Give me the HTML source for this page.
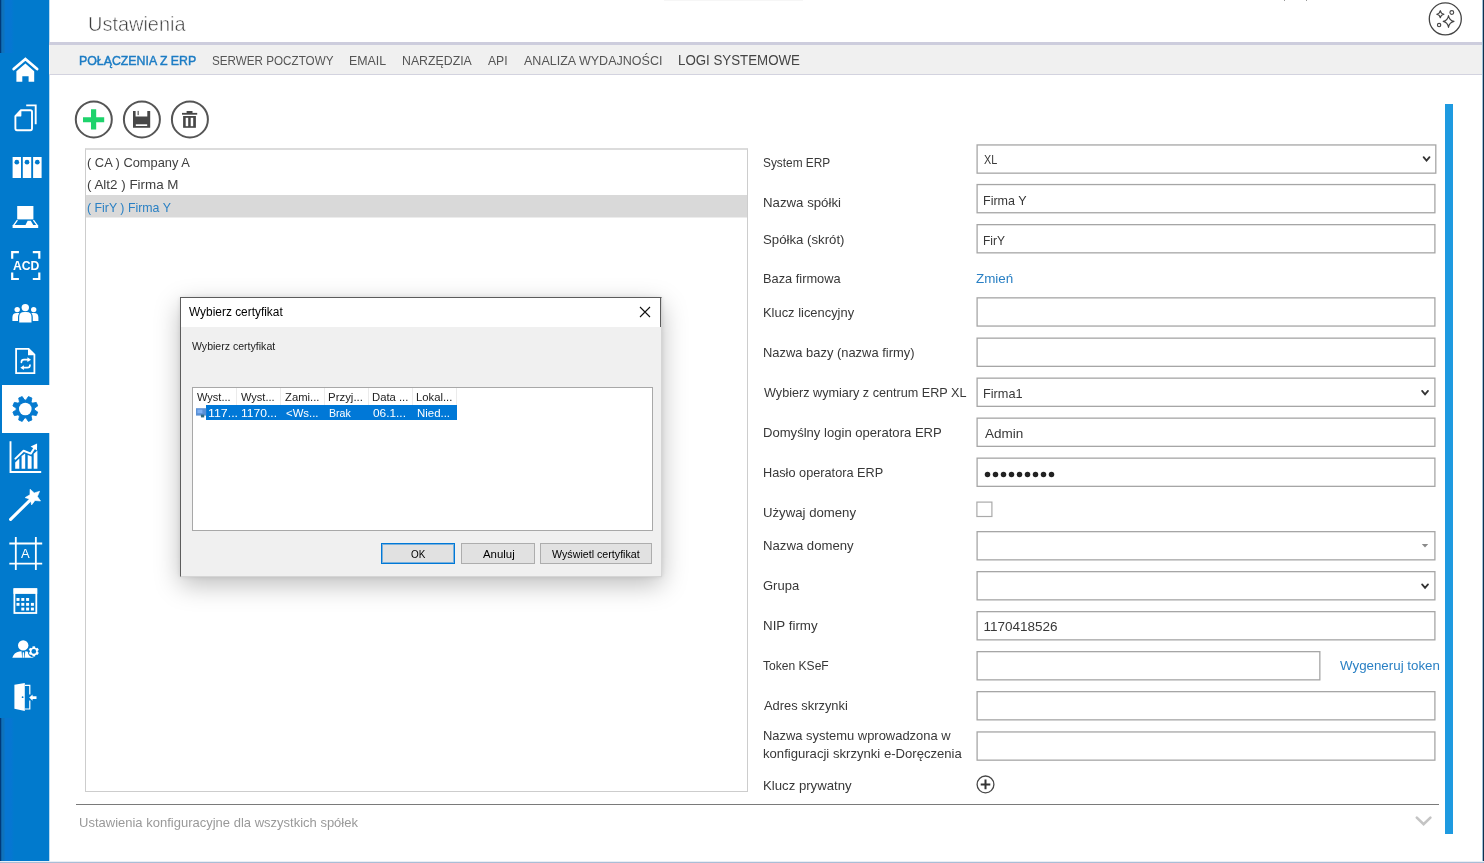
<!DOCTYPE html>
<html lang="pl">
<head>
<meta charset="utf-8">
<title>Ustawienia</title>
<style>
html,body{margin:0;padding:0;}
body{width:1484px;height:863px;overflow:hidden;background:#fff;position:relative;font-family:"Liberation Sans",sans-serif;}
.abs{position:absolute;}
.t{position:absolute;white-space:nowrap;line-height:1;transform-origin:0 0;display:inline-block;}
#side{left:0;top:0;width:49px;height:863px;background:#017acd;}
#side .dk{position:absolute;left:0;width:14px;background:linear-gradient(to right,#003a7a 0,#003a7a 1px,#0b62aa 1px,#0b62aa 2px,#0f72ba 2px,#0f72ba 4px,#0676d2 5px,#0676d2 11px,#017acd 14px);}
#active{left:2px;top:385px;width:48px;height:48px;background:#fff;}
#hline{left:49px;top:42px;width:1435px;height:3px;background:#cdcddd;}
#tabs{left:49px;top:45px;width:1435px;height:29px;background:#f0f0f0;border-bottom:1px solid #d3d3df;}
#list{left:85px;top:148px;width:661px;height:641px;border:1px solid #cdcdcd;border-top:2px solid #dcdcdc;background:#fff;}
#sel{left:86px;top:195px;width:661px;height:22px;background:#d9d9d9;border-bottom:1px solid #ececec;}
.in{position:absolute;left:976px;width:458px;height:28px;border:1px solid #ababab;background:#fff;box-shadow:0 0 0 0.5px #d8d8d8;}
#bar{left:1445px;top:104px;width:8px;height:730px;background:#1e9ae0;}
#bline{left:76px;top:804px;width:1363px;height:1px;background:#7a7a7a;}
#redge{left:1482px;top:0;width:2px;height:863px;background:linear-gradient(to right,#9dc0d8 0,#9dc0d8 1px,#10304c 1px,#10304c 2px);}
#bedge{left:0;top:861px;width:1484px;height:2px;background:linear-gradient(#e9eef5 0,#e9eef5 1px,#a9bdd6 1px,#a9bdd6 2px);}
#chk{left:976px;top:502px;width:14px;height:13px;border:1px solid #aaa;background:#fff;}
/* dialog */
#dlg{left:180px;top:297px;width:480px;height:278px;background:#f0f0f0;border:1px solid #5c5c5c;border-right-color:#d5d5d5;border-bottom-color:#d5d5d5;box-shadow:0 8px 24px rgba(0,0,0,.26),0 0 5px rgba(0,0,0,.10);}
#dtitle{left:181px;top:298px;width:480px;height:29px;background:#fff;}
#dtr{left:660px;top:297px;width:1px;height:30px;background:#5c5c5c;}
#dlist{left:192px;top:387px;width:459px;height:142px;border:1px solid #a8a8a8;background:#fff;}
.cd{position:absolute;top:388px;width:1px;height:17px;background:#ebebeb;}
#drow{left:206px;top:405px;width:251px;height:15px;background:#0078d7;}
.btn{position:absolute;top:543px;height:19px;border:1px solid #adadad;background:#e1e1e1;}
</style>
</head>
<body>
<div id="side" class="abs">
  <div class="dk" style="top:0;height:53px"></div>
  <div class="dk" style="top:718px;height:145px"></div>
</div>
<div id="sedge" class="abs" style="left:49px;top:0;width:1px;height:863px;background:#b9daf1"></div>
<div id="active" class="abs"></div>
<svg class="abs" style="left:0;top:0;will-change:transform" width="49" height="863" viewBox="0 0 49 863" fill="none" stroke="none">
 <!-- home -->
 <g>
  <path d="M13.7 69 L25.4 59 L37.1 69" stroke="#fff" stroke-width="2.8" stroke-linecap="round" stroke-linejoin="miter"/>
  <path d="M16.4 71.2 L25.4 63.6 L34.2 71.2 V81.8 H28.6 V76.2 H22.3 V81.8 H16.4 Z" fill="#fff"/>
 </g>
 <!-- docs -->
 <g stroke="#fff" stroke-width="1.9" stroke-linejoin="round" stroke-linecap="round">
  <path d="M21 110.2 H30.4 Q32 110.2 32 111.8 V128.6 Q32 130.2 30.4 130.2 H17 Q15.4 130.2 15.4 128.6 V116.2 Z"/>
  <path d="M26.2 105.4 H35.7 V124.2" stroke-linecap="butt" stroke-linejoin="miter"/>
 </g>
 <path d="M15.2 116.6 L21.4 110 V115.4 Q21.4 116.6 20.2 116.6 Z" fill="#fff"/>
 <!-- binders -->
 <g fill="#fff">
  <rect x="12.6" y="157" width="8.4" height="21"/>
  <rect x="22.8" y="157" width="8.4" height="21"/>
  <rect x="33.1" y="157" width="8.5" height="21"/>
  <circle cx="16.8" cy="162.2" r="2.35" fill="#017acd"/>
  <circle cx="27" cy="162.2" r="2.35" fill="#017acd"/>
  <circle cx="37.3" cy="162.2" r="2.35" fill="#017acd"/>
 </g>
 <!-- scanner -->
 <g>
  <rect x="17.2" y="206" width="16.2" height="13.4" fill="#fff"/>
  <path d="M17.4 220.2 L13.4 225.6 H37.4 L33.4 220.2" stroke="#fff" stroke-width="1.3" stroke-linejoin="round"/>
  <rect x="12.6" y="225" width="25.6" height="3" fill="#fff"/>
  <path d="M25.4 225.2 L27.6 220.8 H30.8 L33.4 225.2 Z" fill="#fff"/>
 </g>
 <!-- ACD -->
 <g stroke="#fff" stroke-width="2.2" stroke-linecap="butt">
  <path d="M12.2 258.8 V252.2 H18.9"/>
  <path d="M32.8 252.2 H39.3 V258.8"/>
  <path d="M12.2 272.6 V279 H18.9"/>
  <path d="M32.8 279 H39.3 V272.6"/>
 </g>
 <text x="26.15" y="270.1" text-anchor="middle" font-family="Liberation Sans, sans-serif" font-weight="bold" font-size="12" fill="#fff" textLength="26.5" lengthAdjust="spacingAndGlyphs">ACD</text>
 <!-- people -->
 <g fill="#fff">
  <circle cx="25.3" cy="307.6" r="3.7"/>
  <path d="M19.2 322.4 V317 Q19.2 312 24.2 312 H26.6 Q31.5 312 31.5 317 V322.4 Z"/>
  <circle cx="17.2" cy="309.6" r="2.7"/>
  <path d="M12.4 321 V317.2 Q12.4 312.9 16.8 312.9 H19.4 Q18 314.6 18 317 V321 Z"/>
  <circle cx="33.7" cy="309.6" r="2.7"/>
  <path d="M38.4 321 V317.2 Q38.4 312.9 34 312.9 H31.4 Q32.8 314.6 32.8 317 V321 Z"/>
 </g>
 <!-- doc sync -->
 <g stroke="#fff" stroke-width="1.8" stroke-linejoin="miter" stroke-linecap="butt">
  <path d="M16.1 348.8 H28.6 L34.4 354.6 V373.2 H16.1 Z"/>
 </g>
 <path d="M28 348.4 L34.8 355.2 H28 Z" fill="#fff"/>
 <g stroke="#fff" stroke-width="1.7" stroke-linecap="round">
  <path d="M21.4 362.3 Q21.4 359.7 24 359.7 H28"/>
  <path d="M30 365 Q30 367.7 27.3 367.7 H23.4"/>
 </g>
 <path d="M27.4 357.3 L31 359.7 L27.4 362.1 Z" fill="#fff"/>
 <path d="M23.9 365.3 L20.3 367.7 L23.9 370.1 Z" fill="#fff"/>
 <!-- gear (active) -->
 <path d="M25.30 400.20 L26.47 399.47 L28.40 396.58 L31.89 398.03 L31.21 401.44 L31.52 402.78 L32.86 403.09 L36.27 402.41 L37.72 405.90 L34.83 407.83 L34.10 409.00 L34.83 410.17 L37.72 412.10 L36.27 415.59 L32.86 414.91 L31.52 415.22 L31.21 416.56 L31.89 419.97 L28.40 421.42 L26.47 418.53 L25.30 417.80 L24.13 418.53 L22.20 421.42 L18.71 419.97 L19.39 416.56 L19.08 415.22 L17.74 414.91 L14.33 415.59 L12.88 412.10 L15.77 410.17 L16.50 409.00 L15.77 407.83 L12.88 405.90 L14.33 402.41 L17.74 403.09 L19.08 402.78 L19.39 401.44 L18.71 398.03 L22.20 396.58 L24.13 399.47 Z" fill="#067acf" stroke="#067acf" stroke-width="0.9" stroke-linejoin="round"/>
 <circle cx="25.3" cy="409" r="6.3" fill="#fff"/>
 <!-- chart -->
 <g>
  <path d="M10.5 441.2 V472 H41.2" stroke="#fff" stroke-width="1.9"/>
  <g fill="#fff">
   <path d="M15.2 462.6 L19.3 458.6 V468.8 H15.2 Z"/>
   <path d="M21.6 456 L25.2 453.6 V468.8 H21.6 Z"/>
   <path d="M27.7 455 L31.6 456.4 V468.8 H27.7 Z"/>
   <path d="M33.7 453.8 L37.4 450.6 V468.8 H33.7 Z"/>
  </g>
  <path d="M15.4 458.6 L23.6 450.8 L30.8 453.6 L34.6 447.8" stroke="#fff" stroke-width="2" stroke-linejoin="round" stroke-linecap="round"/>
  <path d="M30.6 446.4 L37.1 443.4 L37 450.6 Z" fill="#fff"/>
 </g>
 <!-- wand -->
 <g>
  <path d="M10.6 519.4 L30.4 499.8" stroke="#fff" stroke-width="3.1" stroke-linecap="round"/>
  <path d="M30.09 489.19 L34.27 492.89 L39.62 491.30 L37.38 496.42 L40.55 501.01 L34.99 500.47 L31.60 504.90 L30.40 499.45 L25.14 497.60 L29.95 494.77 Z" fill="#fff" stroke="#fff" stroke-width="0.6" stroke-linejoin="round"/>
 </g>
 <!-- grid A -->
 <g stroke="#fff" stroke-width="1.8">
  <path d="M15.8 537.1 V570 M35.85 537.1 V570 M9.3 543.5 H42.2 M9.3 563.7 H42.2"/>
 </g>
 <text x="25.4" y="557.5" text-anchor="middle" font-family="Liberation Sans, sans-serif" font-size="13" fill="#fff">A</text>
 <!-- calendar -->
 <g>
  <rect x="14.4" y="589.2" width="21.9" height="23.8" stroke="#fff" stroke-width="1.8"/>
  <rect x="13.5" y="588.3" width="23.7" height="5.6" fill="#fff"/>
  <g fill="#fff">
   <rect x="16.5" y="598" width="3" height="2.9"/><rect x="21.3" y="598" width="3" height="2.9"/><rect x="26.1" y="598" width="3" height="2.9"/>
   <rect x="16.5" y="602.9" width="3" height="2.9"/><rect x="21.3" y="602.9" width="3" height="2.9"/><rect x="26.1" y="602.9" width="3" height="2.9"/><rect x="30.9" y="602.9" width="3" height="2.9"/>
   <rect x="21.3" y="607.6" width="3" height="2.9"/><rect x="26.1" y="607.6" width="3" height="2.9"/><rect x="30.9" y="607.6" width="3" height="2.9"/>
  </g>
 </g>
 <!-- user gear -->
 <g fill="#fff">
  <circle cx="23.2" cy="645.4" r="5.2"/>
  <path d="M12.3 657.8 Q13.8 652.4 19.4 651.4 L21.5 651.2 L22.2 657.8 Z"/>
  <path d="M24.6 657.8 L25.3 651.2 L27.2 651.4 Q30.6 652 32.4 654.6 L33.6 657.8 Z"/>
  <path d="M22.8 652.2 H24 L24.3 657.8 H22.5 Z"/>
  <circle cx="33.8" cy="651.4" r="6" fill="#017acd"/>
  <g transform="translate(33.8 651.4)">
   <rect x="-1.3" y="-5.1" width="2.6" height="10.2"/>
   <rect x="-1.3" y="-5.1" width="2.6" height="10.2" transform="rotate(60)"/>
   <rect x="-1.3" y="-5.1" width="2.6" height="10.2" transform="rotate(120)"/>
   <circle r="3.9"/>
   <circle r="2.35" fill="#017acd"/>
  </g>
 </g>
 <!-- door -->
 <g>
  <path d="M14.4 684.8 L24.8 683 V711 L14.4 708.8 Z" fill="#fff"/>
  <path d="M24.8 685.4 H29.8 V694.6 M29.8 700.6 V709 H24.8" stroke="#fff" stroke-width="1.2"/>
  <circle cx="22.6" cy="697.2" r="0.9" fill="#017acd"/>
  <path d="M29.2 697.6 L32.6 694.6 V696.2 H36.5 V699.1 H32.6 V700.7 Z" fill="#fff"/>
 </g>
</svg>

<div id="hline" class="abs"></div>
<div id="tabs" class="abs"></div>
<div id="list" class="abs"></div>
<div id="sel" class="abs"></div>


<svg class="abs" style="left:0;top:0" width="1484" height="863" viewBox="0 0 1484 863" fill="#fff" stroke="#a6a6a6" stroke-width="1.3">
 <rect x="977.1" y="144.95" width="458.70" height="28.20"/>
 <rect x="977.1" y="184.55" width="457.80" height="28.20"/>
 <rect x="977.1" y="224.65" width="457.80" height="28.20"/>
 <rect x="977.1" y="297.85" width="457.80" height="28.20"/>
 <rect x="977.1" y="338.15" width="457.80" height="28.20"/>
 <rect x="977.1" y="378.15" width="457.80" height="28.20"/>
 <rect x="977.1" y="418.15" width="457.80" height="28.20"/>
 <rect x="977.1" y="458.15" width="457.80" height="28.20"/>
 <rect x="977.1" y="531.65" width="457.80" height="28.20"/>
 <rect x="977.1" y="571.65" width="457.80" height="28.20"/>
 <rect x="977.1" y="611.65" width="457.80" height="28.20"/>
 <rect x="977.1" y="651.65" width="342.75" height="28.20"/>
 <rect x="977.1" y="691.65" width="457.80" height="28.20"/>
 <rect x="977.1" y="731.95" width="457.80" height="28.20"/>
 <rect x="976.9" y="502.1" width="15" height="14.4" stroke="#aaa" stroke-width="1.2"/>
</svg>
<div id="bar" class="abs"></div>
<div id="bline" class="abs"></div>

<div id="dlg" class="abs"></div>
<div id="dtitle" class="abs"></div>
<div id="dtr" class="abs"></div>
<div id="dlist" class="abs"></div>
<div class="cd" style="left:236px"></div><div class="cd" style="left:280px"></div><div class="cd" style="left:324px"></div>
<div class="cd" style="left:368px"></div><div class="cd" style="left:412px"></div><div class="cd" style="left:456px"></div>
<div id="drow" class="abs"></div>
<div class="btn" style="left:381px;width:72px;border:1px solid #0078d7;box-shadow:inset 0 0 0 1px rgba(0,120,215,.45)"></div>
<div class="btn" style="left:461px;width:72px"></div>
<div class="btn" style="left:540px;width:110px"></div>

<div id="txt" style="position:absolute;left:0;top:0;width:1484px;height:863px;will-change:transform;">
<span class="t" id="t0" style="left:88.22px;top:12.72px;font-size:21px;color:#3c3c3c;-webkit-text-stroke:0.55px #fff;transform:scaleX(0.9502)">Ustawienia</span>
<span class="t" id="t1" style="left:78.87px;top:54.00px;font-size:13px;color:#1c7cc4;-webkit-text-stroke:0.45px #1c7cc4;transform:scaleX(0.9489)">POŁĄCZENIA Z ERP</span>
<span class="t" id="t2" style="left:211.94px;top:54.00px;font-size:13px;color:#555;transform:scaleX(0.8976)">SERWER POCZTOWY</span>
<span class="t" id="t3" style="left:349.13px;top:54.00px;font-size:13px;color:#555;transform:scaleX(0.9520)">EMAIL</span>
<span class="t" id="t4" style="left:401.73px;top:54.00px;font-size:13px;color:#555;transform:scaleX(0.9476)">NARZĘDZIA</span>
<span class="t" id="t5" style="left:488.40px;top:54.00px;font-size:13px;color:#555;transform:scaleX(0.9367)">API</span>
<span class="t" id="t6" style="left:523.70px;top:54.00px;font-size:13px;color:#555;transform:scaleX(0.9628)">ANALIZA WYDAJNOŚCI</span>
<span class="t" id="t7" style="left:677.93px;top:53.15px;font-size:14px;color:#444;transform:scaleX(0.9500)">LOGI SYSTEMOWE</span>
<span class="t" id="t8" style="left:87.17px;top:155.57px;font-size:13.5px;color:#404040;transform:scaleX(0.9522)">( CA ) Company A</span>
<span class="t" id="t9" style="left:87.13px;top:178.07px;font-size:13.5px;color:#404040;transform:scaleX(0.9917)">( Alt2 ) Firma M</span>
<span class="t" id="t10" style="left:87.20px;top:200.57px;font-size:13.5px;color:#2a80c4;transform:scaleX(0.9144)">( FirY ) Firma Y</span>
<span class="t" id="t11" style="left:763.15px;top:155.57px;font-size:13.5px;color:#383838;transform:scaleX(0.8785)">System ERP</span>
<span class="t" id="t12" style="left:762.60px;top:195.57px;font-size:13.5px;color:#383838;transform:scaleX(0.9806)">Nazwa spółki</span>
<span class="t" id="t13" style="left:763.09px;top:232.57px;font-size:13.5px;color:#383838;transform:scaleX(0.9786)">Spółka (skrót)</span>
<span class="t" id="t14" style="left:762.63px;top:271.57px;font-size:13.5px;color:#383838;transform:scaleX(0.9488)">Baza firmowa</span>
<span class="t" id="t15" style="left:762.62px;top:305.57px;font-size:13.5px;color:#383838;transform:scaleX(0.9562)">Klucz licencyjny</span>
<span class="t" id="t16" style="left:762.62px;top:345.57px;font-size:13.5px;color:#383838;transform:scaleX(0.9568)">Nazwa bazy (nazwa firmy)</span>
<span class="t" id="t17" style="left:763.58px;top:385.57px;font-size:13.5px;color:#383838;transform:scaleX(0.9357)">Wybierz wymiary z centrum ERP XL</span>
<span class="t" id="t18" style="left:762.61px;top:425.57px;font-size:13.5px;color:#383838;transform:scaleX(0.9685)">Domyślny login operatora ERP</span>
<span class="t" id="t19" style="left:762.64px;top:465.57px;font-size:13.5px;color:#383838;transform:scaleX(0.9423)">Hasło operatora ERP</span>
<span class="t" id="t20" style="left:762.72px;top:505.57px;font-size:13.5px;color:#383838;transform:scaleX(0.9761)">Używaj domeny</span>
<span class="t" id="t21" style="left:762.60px;top:539.07px;font-size:13.5px;color:#383838;transform:scaleX(0.9741)">Nazwa domeny</span>
<span class="t" id="t22" style="left:763.10px;top:579.07px;font-size:13.5px;color:#383838;transform:scaleX(0.9627)">Grupa</span>
<span class="t" id="t23" style="left:762.59px;top:619.07px;font-size:13.5px;color:#383838;transform:scaleX(0.9885)">NIP firmy</span>
<span class="t" id="t24" style="left:763.48px;top:659.07px;font-size:13.5px;color:#383838;transform:scaleX(0.8935)">Token KSeF</span>
<span class="t" id="t25" style="left:763.70px;top:699.07px;font-size:13.5px;color:#383838;transform:scaleX(0.9554)">Adres skrzynki</span>
<span class="t" id="t26" style="left:762.62px;top:729.07px;font-size:13.5px;color:#383838;transform:scaleX(0.9576)">Nazwa systemu wprowadzona w</span>
<span class="t" id="t27" style="left:762.85px;top:747.07px;font-size:13.5px;color:#383838;transform:scaleX(0.9706)">konfiguracji skrzynki e-Doręczenia</span>
<span class="t" id="t28" style="left:762.60px;top:779.07px;font-size:13.5px;color:#383838;transform:scaleX(0.9763)">Klucz prywatny</span>
<span class="t" id="t29" style="left:976.13px;top:271.57px;font-size:13.5px;color:#2a80c4;transform:scaleX(0.9931)">Zmień</span>
<span class="t" id="t30" style="left:1340.38px;top:659.07px;font-size:13.5px;color:#2a80c4;transform:scaleX(0.9875)">Wygeneruj token</span>
<span class="t" id="t31" style="left:983.70px;top:153.07px;font-size:13.5px;color:#383838;transform:scaleX(0.8000)">XL</span>
<span class="t" id="t32" style="left:983.16px;top:193.57px;font-size:13.5px;color:#383838;transform:scaleX(0.9286)">Firma Y</span>
<span class="t" id="t33" style="left:983.20px;top:233.57px;font-size:13.5px;color:#383838;transform:scaleX(0.8925)">FirY</span>
<span class="t" id="t34" style="left:982.94px;top:386.57px;font-size:13.5px;color:#383838;transform:scaleX(0.9441)">Firma1</span>
<span class="t" id="t35" style="left:984.50px;top:427.07px;font-size:13.5px;color:#383838;transform:scaleX(1.0033)">Admin</span>
<span class="t" id="t36" style="left:983.50px;top:620.07px;font-size:13.5px;color:#383838;transform:scaleX(1.0000)">1170418526</span>
<span class="t" id="t37" style="left:79.04px;top:815.57px;font-size:13.5px;color:#999;transform:scaleX(0.9632)">Ustawienia konfiguracyjne dla wszystkich spółek</span>
<span class="t" id="t38" style="left:189.38px;top:305.84px;font-size:12px;color:#000;transform:scaleX(0.9907)">Wybierz certyfikat</span>
<span class="t" id="t39" style="left:191.88px;top:341.19px;font-size:11px;color:#222;transform:scaleX(0.9595)">Wybierz certyfikat</span>
<span class="t" id="t40" style="left:196.87px;top:392.19px;font-size:11px;color:#222;transform:scaleX(1.0039)">Wyst...</span>
<span class="t" id="t41" style="left:240.87px;top:392.19px;font-size:11px;color:#222;transform:scaleX(1.0039)">Wyst...</span>
<span class="t" id="t42" style="left:284.62px;top:392.19px;font-size:11px;color:#222;transform:scaleX(1.0233)">Zami...</span>
<span class="t" id="t43" style="left:328.09px;top:392.19px;font-size:11px;color:#222;transform:scaleX(1.0394)">Przyj...</span>
<span class="t" id="t44" style="left:372.10px;top:392.19px;font-size:11px;color:#222;transform:scaleX(1.0260)">Data ...</span>
<span class="t" id="t45" style="left:416.10px;top:392.19px;font-size:11px;color:#222;transform:scaleX(1.0260)">Lokal...</span>
<span class="t" id="t46" style="left:207.62px;top:407.69px;font-size:11px;color:#fff;transform:scaleX(1.1256)">117...</span>
<span class="t" id="t47" style="left:240.64px;top:407.69px;font-size:11px;color:#fff;transform:scaleX(1.0968)">1170...</span>
<span class="t" id="t48" style="left:285.78px;top:407.69px;font-size:11px;color:#fff;transform:scaleX(1.0333)">&lt;Ws...</span>
<span class="t" id="t49" style="left:328.56px;top:407.69px;font-size:11px;color:#fff;transform:scaleX(0.9655)">Brak</span>
<span class="t" id="t50" style="left:372.70px;top:407.69px;font-size:11px;color:#fff;transform:scaleX(1.0769)">06.1...</span>
<span class="t" id="t51" style="left:416.59px;top:407.69px;font-size:11px;color:#fff;transform:scaleX(1.0377)">Nied...</span>
<span class="t" id="t52" style="left:410.80px;top:548.69px;font-size:11px;color:#000;transform:scaleX(0.9016)">OK</span>
<span class="t" id="t53" style="left:482.50px;top:548.69px;font-size:11px;color:#000;transform:scaleX(1.0377)">Anuluj</span>
<span class="t" id="t54" style="left:551.88px;top:548.69px;font-size:11px;color:#000;transform:scaleX(0.9709)">Wyświetl certyfikat</span>
</div>
<svg class="abs" style="left:0;top:0;pointer-events:none" width="1484" height="863" viewBox="0 0 1484 863" fill="none">
 <!-- toolbar buttons -->
 <g stroke="#555" stroke-width="2">
  <circle cx="93.8" cy="119.4" r="18"/>
  <circle cx="141.9" cy="119.4" r="18"/>
  <circle cx="189.9" cy="119.4" r="18"/>
 </g>
 <path d="M91 109.2 H96.2 V117.2 H104.2 V122.3 H96.2 V129.6 H91 V122.3 H83 V117.2 H91 Z" fill="#1ed36c"/>
 <!-- save -->
 <path d="M133 110.9 H135.6 V116.6 H147.3 V110.9 H150.2 V127.8 H133 Z" fill="#474747"/>
 <rect x="137.6" y="110.9" width="1.1" height="4.2" fill="#474747"/>
 <rect x="135.8" y="124.3" width="11.4" height="1.7" fill="#fff"/>
 <!-- trash -->
 <g fill="#474747">
  <rect x="186.6" y="111" width="5.9" height="2.2"/>
  <rect x="182" y="112.9" width="15.2" height="1.8"/>
  <path d="M183.1 116 H195.9 V127.8 H183.1 Z"/>
 </g>
 <rect x="185.7" y="117.8" width="2.5" height="8.4" fill="#fff"/>
 <rect x="190.7" y="117.8" width="2.5" height="8.4" fill="#fff"/>

 <!-- select chevrons -->
 <g stroke="#333" stroke-width="1.8" stroke-linecap="round" stroke-linejoin="miter">
  <path d="M1423.6 157.2 L1426.55 160.7 L1429.5 157.2"/>
  <path d="M1422.1 390.9 L1425.05 394.4 L1428 390.9"/>
  <path d="M1422.1 584.4 L1425.05 587.9 L1428 584.4"/>
 </g>
 <path d="M1421.8 544 H1428.2 L1425 547.4 Z" fill="#8a8a8a"/>

 <!-- password dots -->
 <g fill="#222">
  <circle cx="987.5" cy="474.5" r="2.75"/><circle cx="995.5" cy="474.5" r="2.75"/><circle cx="1003.5" cy="474.5" r="2.75"/>
  <circle cx="1011.5" cy="474.5" r="2.75"/><circle cx="1019.5" cy="474.5" r="2.75"/><circle cx="1027.5" cy="474.5" r="2.75"/>
  <circle cx="1035.5" cy="474.5" r="2.75"/><circle cx="1043.5" cy="474.5" r="2.75"/><circle cx="1051.5" cy="474.5" r="2.75"/>
 </g>

 <!-- plus circle -->
 <circle cx="985.5" cy="784.4" r="8.4" stroke="#484848" stroke-width="1.3"/>
 <path d="M980.7 784.4 H990.3 M985.5 779.6 V789.2" stroke="#333" stroke-width="2"/>

 <!-- bottom chevron -->
 <path d="M1416.8 817.6 L1423.6 824.2 L1430.4 817.6" stroke="#c4c4c4" stroke-width="2.6" stroke-linecap="round"/>

 <!-- sparkle -->
 <g stroke="#444" stroke-width="1.1" stroke-linejoin="round">
  <circle cx="1445.3" cy="18.9" r="16" stroke-width="1.3"/>
  <path d="M1448.5 15.6 Q1449.3 20.4 1454 21.4 Q1449.3 22.4 1448.5 27.4 Q1447.7 22.4 1443.2 21.4 Q1447.7 20.4 1448.5 15.6 Z"/>
  <path d="M1440.3 10.6 Q1440.8 13.6 1444 14.2 Q1440.8 14.8 1440.3 17.8 Q1439.8 14.8 1436.7 14.2 Q1439.8 13.6 1440.3 10.6 Z"/>
  <circle cx="1451.8" cy="12.5" r="1.9"/>
  <circle cx="1439.1" cy="25.1" r="1.7"/>
 </g>

 <!-- dialog close -->
 <path d="M640 307 L650 317 M650 307 L640 317" stroke="#111" stroke-width="1.1"/>
 <!-- cert icon -->
 <rect x="196" y="408.2" width="10.2" height="7.4" fill="#5a90d4"/>
 <rect x="197.4" y="409.6" width="5" height="3.6" fill="#7fb0f2"/>
 <rect x="200.9" y="414.6" width="3.3" height="2.8" fill="#2f6a80"/>
</svg>

<div class="abs" style="left:664px;top:0;width:139px;height:1px;background:#f6f6f6"></div><div class="abs" style="left:1284px;top:0;width:1px;height:1px;background:#9a9a9a"></div><div class="abs" style="left:1306px;top:0;width:1px;height:1px;background:#9a9a9a"></div>
<div id="redge" class="abs"></div>
<div id="bedge" class="abs"></div>
</body>
</html>
